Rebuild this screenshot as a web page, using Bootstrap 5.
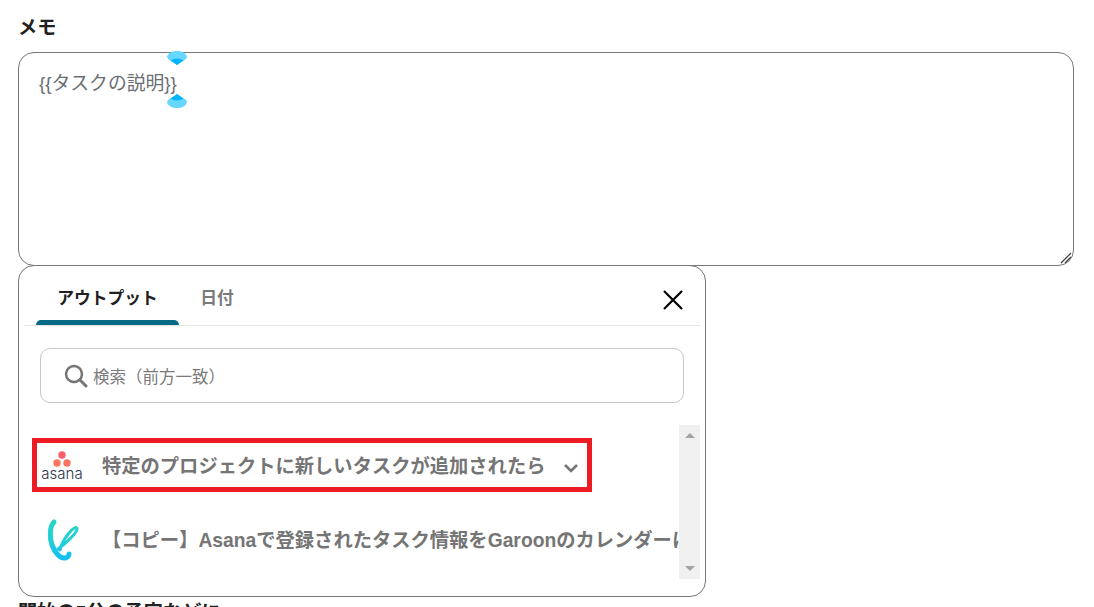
<!DOCTYPE html>
<html lang="ja">
<head>
<meta charset="utf-8">
<meta name="viewport" content="width=device-width, initial-scale=1">
<link href="https://cdn.jsdelivr.net/npm/bootstrap@5.3.0/dist/css/bootstrap.min.css" rel="stylesheet">
<script src="https://cdn.jsdelivr.net/npm/bootstrap@5.3.0/dist/js/bootstrap.bundle.min.js"></script>
<style>
html, body { height: 100%; overflow: hidden; }
body {
  font-family: "Liberation Sans", "Noto Sans CJK JP", sans-serif;
  background: #fff;
  color: #212121;
  padding: 18px 20px 0 18px;
}
.memo-label { font-size: 19.2px; font-weight: 700; line-height: 20px; margin-bottom: 14px; }

/* textarea */
.memo-box {
  position: relative;
  height: 214px;
  border: 1px solid #767676;
  border-radius: 16px;
  padding: 20px 20px;
  font-size: 18.8px;
  line-height: 22px;
  color: #6a6e73;
}
.memo-grip { position: absolute; right: 1px; bottom: 1px; }
.caret-top, .caret-bottom { position: absolute; left: 148px; }
.caret-top { top: -2px; }
.caret-bottom { top: 41px; }

/* output popup */
.out-panel {
  width: 688px;
  height: 332px;
  margin-top: -1px;
  border: 1px solid #767676;
  border-radius: 16px;
  background: #fff;
  padding: 0 5px;
}
.out-tabs { height: 60px; border-bottom: 1px solid #e4e4e4; padding-left: 12px; }
.out-tab { width: 143px; height: 59px; text-align: center; font-size: 16.8px; font-weight: 700; color: #7a7a7a; }
.out-tab-text { height: 54px; line-height: 65px; }
.out-tab-on { color: #212121; }
.out-tab-bar { height: 5px; background: #086a84; border-radius: 5px 5px 0 0; }
.out-tab-second { width: 76px; }
.out-close { margin-right: 17px; margin-top: 24px; }

.out-search {
  height: 55px;
  margin: 22px 16px 22px 16px;
  border: 1px solid #c8c8c8;
  border-radius: 10px;
  padding-left: 23px;
  padding-top: 3px;
  font-size: 16.5px;
  color: #7a7a7a;
}
.out-search span { margin-left: 5px; }
.out-search svg { margin-top: -3px; }

.out-list { height: 154px; }
.out-items { width: 655px; overflow: hidden; flex: none; }
.out-scroll { width: 21px; flex: none; background: #f0f0f0; }
.tri-up { border-left: 5px solid transparent; border-right: 5px solid transparent; border-bottom: 5px solid #a3a3a3; }
.tri-down { border-left: 5px solid transparent; border-right: 5px solid transparent; border-top: 5px solid #a3a3a3; }

.flow-row { font-size: 19.3px; font-weight: 700; color: #757575; white-space: nowrap; }
.flow-hit {
  width: 560px;
  height: 54px;
  margin: 13px 0 0 8px;
  border: 5px solid #ed1c24;
  padding-left: 3px;
}
.asana-mark { width: 44px; flex: none; }
.asana-word { font-family: Inter, sans-serif; font-size: 15px; line-height: 13px; font-weight: 300; color: #273347; }
.flow-hit-name { margin-left: 18px; line-height: 24px; padding-top: 4px; }
.flow-chev { margin-left: 18px; margin-top: 5px; }
.flow-plain { height: 60px; margin: 17px 0 0 20px; overflow: hidden; }
.flow-plain-name { margin-left: 22px; padding-top: 4px; }

.next-label { font-size: 19.2px; font-weight: 700; line-height: 20px; margin-top: 6px; white-space: nowrap; }
</style>
</head>
<body>

<div class="memo-label">メモ</div>

<div class="memo-box">
  {{タスクの説明}}
  <svg class="caret-top" width="20" height="15" viewBox="0 0 20 15"><path d="M0 6 C1 2 5 0 10 0 C15 0 19 2 20 6 C19 9 16 10 14 11 L10 14 L6 11 C4 10 1 9 0 6Z" fill="#66d7ff"/><path d="M3.500 9.500 C7 7 13 7 16.500 9.500 L10 14Z" fill="#00b4ff"/></svg>
  <svg class="caret-bottom" width="20" height="15" viewBox="0 0 20 15"><path d="M0 8 C1 5 4 4 6 3 L10 0 L14 3 C16 4 19 5 20 8 C19 12 15 14 10 14 C5 14 1 12 0 8Z" fill="#66d7ff"/><path d="M3.500 4.500 C7 7 13 7 16.500 4.500 L10 0Z" fill="#00b4ff"/></svg>
  <svg class="memo-grip" width="12" height="12" viewBox="0 0 12 12"><path d="M1 11 L11 1 M5 11 L11 5" stroke="#444" stroke-width="1.300" fill="none"/></svg>
</div>

<div class="out-panel">
  <div class="out-tabs d-flex">
    <div class="out-tab out-tab-on">
      <div class="out-tab-text">アウトプット</div>
      <div class="out-tab-bar"></div>
    </div>
    <div class="out-tab out-tab-second">
      <div class="out-tab-text">日付</div>
    </div>
    <svg class="out-close ms-auto" width="20" height="20" viewBox="0 0 20 20"><path d="M1 1 L19 19 M19 1 L1 19" stroke="#000" stroke-width="2.200" fill="none"/></svg>
  </div>

  <div class="out-search d-flex align-items-center">
    <svg width="24" height="24" viewBox="0 0 24 24" class="flex-shrink-0"><circle cx="10" cy="10" r="8" stroke="#757575" stroke-width="2.500" fill="none"/><path d="M16 16 L22 22" stroke="#757575" stroke-width="3" stroke-linecap="round"/></svg>
    <span>検索（前方一致）</span>
  </div>

  <div class="out-list d-flex">
    <div class="out-items">
      <div class="flow-row flow-hit d-flex align-items-center">
        <div class="asana-mark d-flex flex-column align-items-center">
          <svg width="22" height="16" viewBox="0 0 22 16"><circle cx="11" cy="4" r="3.700" fill="#f95d6c"/><circle cx="6" cy="12" r="3.700" fill="#fc7560"/><circle cx="16" cy="12" r="3.700" fill="#fc7560"/></svg>
          <div class="asana-word">asana</div>
        </div>
        <div class="flow-hit-name">特定のプロジェクトに新しいタスクが追加されたら</div>
        <svg class="flow-chev" width="16" height="10" viewBox="0 0 16 10"><path d="M2 2 L8 8 L14 2" stroke="#757575" stroke-width="2.600" fill="none"/></svg>
      </div>
      <div class="flow-row flow-plain d-flex align-items-center">
        <svg width="36" height="44" viewBox="0 0 36 44" class="flex-shrink-0">
          <defs><linearGradient id="yoom" gradientUnits="userSpaceOnUse" x1="0" y1="3" x2="0" y2="43"><stop offset="0" stop-color="#2ad4c4"/><stop offset=".55" stop-color="#22cfd6"/><stop offset="1" stop-color="#12bdf5"/></linearGradient></defs>
          <path d="M10 5 C6 9 5 19 8 28 C11 36 16 41 20 41 C23 41 25 39 25 37" stroke="url(#yoom)" stroke-width="5" fill="none" stroke-linecap="round"/>
          <path d="M14 32 C21 27 33 16 33 12 C33 9 29 11 25 16 C21 21 17 27 16 33" stroke="url(#yoom)" stroke-width="3" fill="none" stroke-linecap="round"/>
        </svg>
        <div class="flow-plain-name">【コピー】Asanaで登録されたタスク情報をGaroonのカレンダーに登録する</div>
      </div>
    </div>
    <div class="out-scroll d-flex flex-column justify-content-between align-items-center py-2">
      <div class="tri-up"></div>
      <div class="tri-down"></div>
    </div>
  </div>
</div>

<div class="next-label">開始の5分の予定などに</div>

</body>
</html>
